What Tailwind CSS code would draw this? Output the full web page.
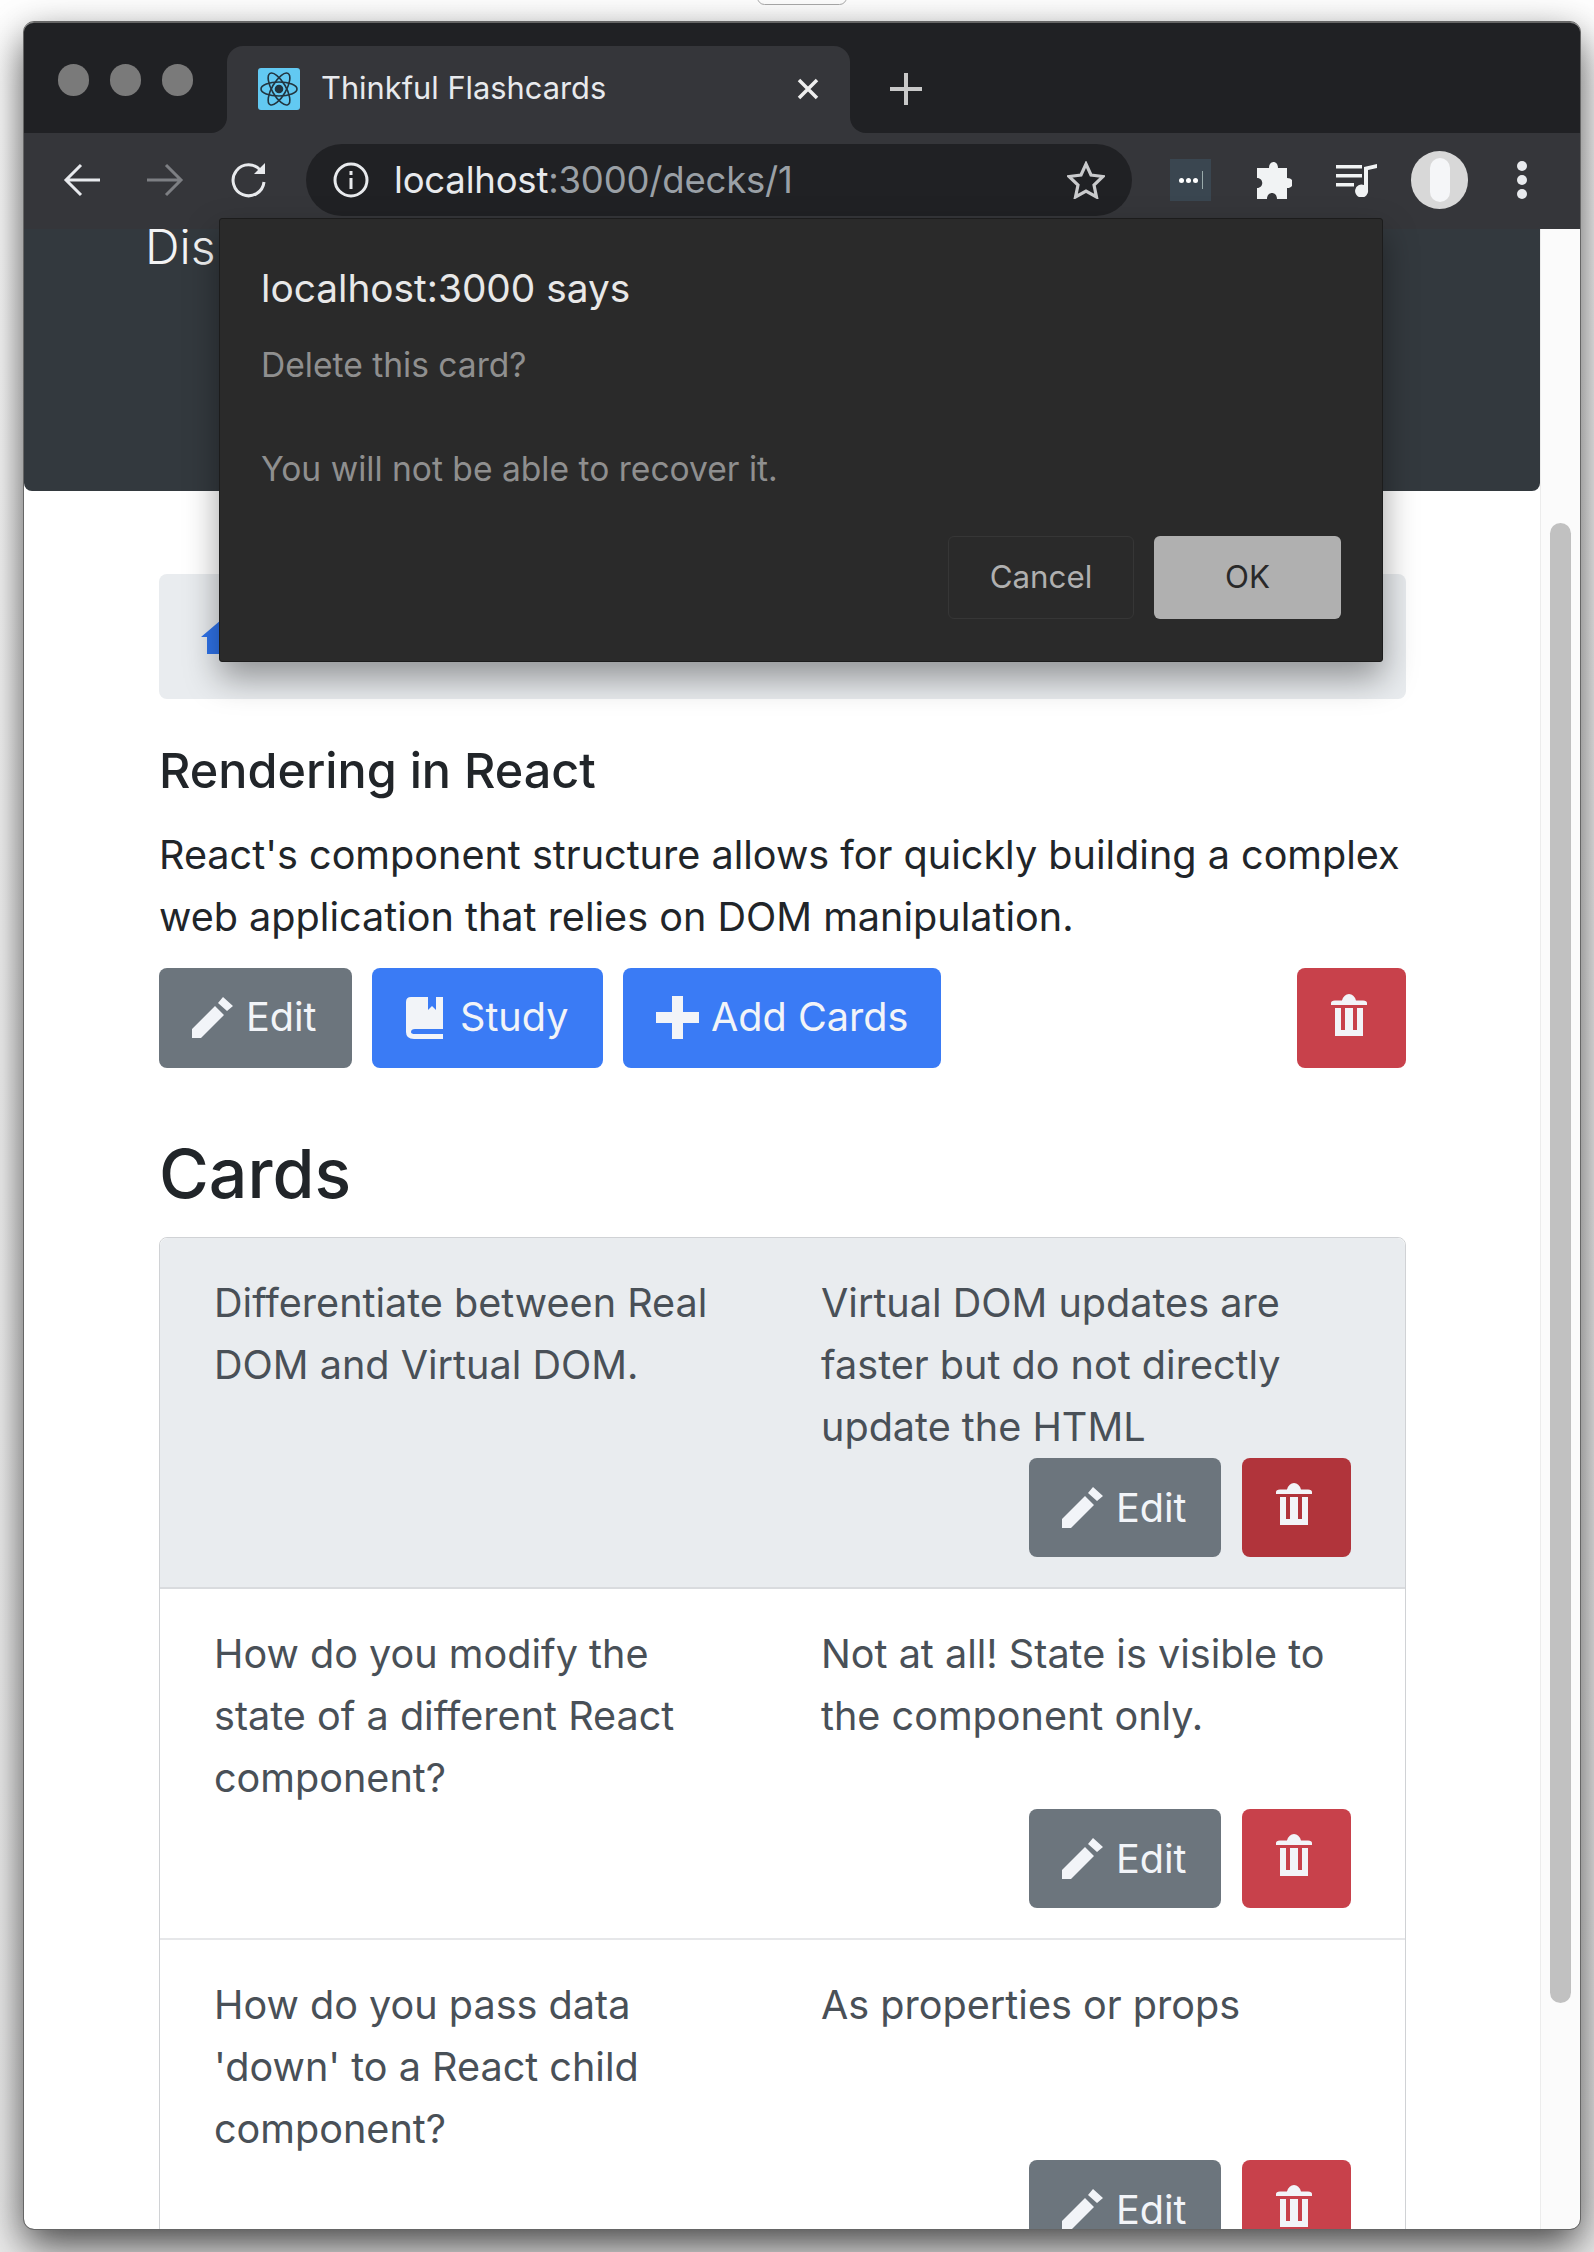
<!DOCTYPE html>
<html lang="en">
<head>
  <meta charset="UTF-8" />
  <title>Thinkful Flashcards</title>
  <script src="https://cdn.jsdelivr.net/npm/@tailwindcss/browser@4"></script>
</head>
<body class="relative h-[2252px] overflow-hidden bg-gradient-to-b from-white to-[#ececec] font-['Inter','Liberation_Sans',sans-serif]">
  <svg class="hidden">
    <symbol id="pencil" viewBox="0 0 42 42"><path d="M0 42V33L23 10L32 19L9 42Z M26 7L31 1L41 10L35 15Z" fill="currentColor"/></symbol>
    <symbol id="trash" viewBox="0 0 36 42"><path d="M0 9Q0 6.500 4 6.500H11Q13 0 18 0Q23 0 25 6.500H32Q36 6.500 36 9V11H0Z M4 14H10V36H14V14H22V36H26V14H32V42H4Z" fill="currentColor" fill-rule="evenodd"/></symbol>
  </svg>

  <!-- tiny pill peeking in at the top -->
  <div class="absolute left-[757px] top-[-10px] h-[15px] w-[90px] rounded-[8px] border border-[#aaa] bg-white"></div>

  <div class="absolute left-[24px] top-[22px] flex h-[2207px] w-[1556px] flex-col overflow-hidden rounded-[10px] border-t border-[#666] bg-white shadow-[0_16px_42px_rgba(0,0,0,0.72)] outline outline-[#666]">

    <!-- tab strip -->
    <div class="flex h-[110px] shrink-0 bg-[linear-gradient(#202124_50%,#35363a_50%)]">
      <div class="flex w-[203px] gap-[21px] rounded-br-[16px] bg-[#202124] pl-[34px] pt-[41px]">
        <span class="h-[32px] w-[31px] rounded-full bg-[#7a7a7a]"></span>
        <span class="h-[32px] w-[31px] rounded-full bg-[#7a7a7a]"></span>
        <span class="h-[32px] w-[31px] rounded-full bg-[#7a7a7a]"></span>
      </div>
      <div class="mt-[23px] flex w-[623px] items-center rounded-t-[16px] bg-[#35363a] pb-[2px] pl-[31px]">
        <svg class="h-[42px] w-[42px] rounded-[3px] bg-[#62c9f2]" viewBox="0 0 42 42" fill="none" stroke="#22343f" stroke-width="1.600">
          <ellipse cx="21" cy="21" rx="18" ry="7"/>
          <ellipse cx="21" cy="21" rx="18" ry="7" transform="rotate(60 21 21)"/>
          <ellipse cx="21" cy="21" rx="18" ry="7" transform="rotate(120 21 21)"/>
          <circle cx="21" cy="21" r="3.500" fill="#22343f"/>
        </svg>
        <span class="ml-[21px] text-[30.800px] text-[#e8eaed]">Thinkful Flashcards</span>
        <svg class="ml-auto mr-[31px] h-[22px] w-[22px]" viewBox="0 0 22 22" stroke="#eee" stroke-width="3.500"><path d="M2 2L20 20M20 2L2 20"/></svg>
      </div>
      <div class="flex flex-1 items-center rounded-bl-[16px] bg-[#202124] pl-[40px] pt-[22px]">
        <svg class="h-[32px] w-[32px]" viewBox="0 0 32 32" stroke="#c8c8c8" stroke-width="4"><path d="M16 0V32M0 16H32"/></svg>
      </div>
    </div>

    <!-- toolbar -->
    <div class="flex h-[96px] shrink-0 items-center bg-[#35363a] pb-[2px]">
      <svg class="ml-[39px] h-[34px] w-[38px]" viewBox="0 0 38 34" fill="none" stroke="#e8eaed" stroke-width="3"><path d="M37 17H3M18 2L3 17L18 32"/></svg>
      <svg class="ml-[45px] h-[34px] w-[38px]" viewBox="0 0 38 34" fill="none" stroke="#7d7f83" stroke-width="3"><path d="M1 17H35M20 2L35 17L20 32"/></svg>
      <svg class="ml-[45px] h-[36px] w-[38px]" viewBox="0 0 38 36" fill="none" stroke="#e8eaed" stroke-width="3"><path d="M32 9A15.500 15.500 0 1 0 35 20"/><path d="M36 1V12H25Z" fill="#e8eaed" stroke="none"/></svg>
      <div class="ml-[39px] flex h-[72px] w-[826px] items-center rounded-full bg-[#202124] pl-[27px]">
        <svg class="h-[36px] w-[36px]" viewBox="0 0 36 36" fill="none" stroke="#e8eaed" stroke-width="3"><circle cx="18" cy="18" r="16"/><path d="M18 16V27M18 9V13"/></svg>
        <span class="ml-[25px] text-[36.500px] tracking-[-0.2px] text-[#e8eaed]">localhost<span class="text-[#9aa0a6]">:3000/decks/1</span></span>
        <svg class="ml-auto mr-[27px] h-[38px] w-[38px]" viewBox="0 0 38 38" fill="none" stroke="#c9cacc" stroke-width="3.200"><path d="M19 3L24 14L36 15.500L27 24L29.500 36L19 30L8.500 36L11 24L2 15.500L14 14Z"/></svg>
      </div>
      <div class="ml-[38px] flex h-[42px] w-[41px] items-center justify-center gap-[2px] bg-[#3a4650]">
        <span class="h-[5px] w-[5px] rounded-full bg-white"></span><span class="h-[5px] w-[5px] rounded-full bg-white"></span><span class="h-[5px] w-[5px] rounded-full bg-white"></span><span class="ml-[2px] h-[18px] w-px bg-[#9aa]"></span>
      </div>
      <svg class="ml-[44px] h-[38px] w-[37px]" viewBox="0 0 37 38" fill="#f1f3f4"><path d="M14 7C14 -1 23 -1 23 7H32V17C40 17 40 27 32 27V38H22C22 30 12 30 12 38H2V27C9 27 9 17 2 17V7Z"/></svg>
      <svg class="ml-[44px] h-[33px] w-[41px]" viewBox="0 0 41 33" fill="#f1f3f4"><path d="M0 1H26V4.500H0ZM0 10H26V13.500H0ZM0 19H18V22.500H0ZM28 3L41 0V4L32 6V26A6.500 6.500 0 1 1 28 21Z"/></svg>
      <div class="ml-[34px] flex h-[58px] w-[57px] items-center justify-center rounded-full bg-[#d8d8d8]">
        <span class="h-[44px] w-[20px] rounded-full bg-[#f5f6f8]"></span>
      </div>
      <div class="ml-[49px] flex flex-col gap-[4px]">
        <span class="h-[10px] w-[10px] rounded-full bg-[#e8eaed]"></span><span class="h-[10px] w-[10px] rounded-full bg-[#e8eaed]"></span><span class="h-[10px] w-[10px] rounded-full bg-[#e8eaed]"></span>
      </div>
    </div>

    <!-- page + scrollbar -->
    <div class="flex min-h-0 flex-1">
      <div class="min-w-0 flex-1 overflow-hidden">
        <div class="h-[262px] rounded-b-[8px] bg-[#33393e] pl-[121px] text-[48px] font-light leading-[36px] text-[#f3f4f5]">Dis</div>

        <div class="ml-[135px] mr-[134px] mt-[83px] flex h-[125px] items-center rounded-[8px] bg-[#e9ecef] pl-[42px]">
          <svg class="h-[34px] w-[40px] text-[#2f73ea]" viewBox="0 0 40 34" fill="currentColor"><path d="M20 0L40 17H34V34H6V17H0Z"/></svg>
        </div>

        <h5 class="ml-[135px] mr-[134px] mt-[41px] text-[48.500px] font-medium leading-[62px] text-[#212529]">Rendering in React</h5>
        <p class="ml-[135px] mr-[134px] mt-[22px] text-[39.600px] leading-[62px] text-[#212529]">React's component structure allows for quickly building a complex<br>web application that relies on DOM manipulation.</p>

        <div class="ml-[135px] mr-[134px] mt-[20px] flex gap-[20px] text-[39.600px] text-[#f2f4f8]">
          <div class="flex h-[100px] w-[193px] items-center rounded-[8px] bg-[#6c757d] pl-[33px]"><svg class="mb-[2px] h-[42px] w-[42px]"><use href="#pencil"/></svg><span class="ml-[12px]">Edit</span></div>
          <div class="flex h-[100px] w-[231px] items-center rounded-[8px] bg-[#3a7bf5] pl-[34px]">
            <svg class="h-[42px] w-[37px]" viewBox="0 0 37 42" fill="currentColor"><path d="M5 0H22V13L26 9L30 13V0H37V32H9Q5 32 5 35Q5 37 9 37H37V42H8Q0 42 0 35V5Q0 0 5 0Z"/></svg>
            <span class="ml-[17px]">Study</span>
          </div>
          <div class="flex h-[100px] w-[318px] items-center rounded-[8px] bg-[#3a7bf5] pl-[33px]">
            <svg class="mb-[2px] h-[43px] w-[43px]" viewBox="0 0 43 43" fill="currentColor"><path d="M16 0H27V16H43V27H27V43H16V27H0V16H16Z"/></svg>
            <span class="ml-[12px]">Add Cards</span>
          </div>
          <div class="ml-auto flex h-[100px] w-[109px] items-center justify-center rounded-[8px] bg-[#c8414b] pb-[7px] pr-[6px]"><svg class="h-[42px] w-[36px]"><use href="#trash"/></svg></div>
        </div>

        <h2 class="ml-[135px] mr-[134px] mt-[57px] text-[68px] font-medium leading-[96px] text-[#212529]">Cards</h2>

        <div class="ml-[135px] mr-[134px] mt-[16px] rounded-t-[8px] border border-[#d0d2d5] text-[39.600px] leading-[62px] text-[#495057]">
          <div class="grid grid-cols-[607px_1fr] rounded-t-[8px] border-b-2 border-[#d9dbde] bg-[#e9ecef] pb-[30px] pl-[54px] pr-[54px] pt-[34px]">
            <p>Differentiate between Real<br>DOM and Virtual DOM.</p>
            <p class="whitespace-nowrap">Virtual DOM updates are<br>faster but do not directly<br>update the HTML</p>
            <div class="col-span-2 flex justify-end gap-[21px] text-[#f2f4f8]">
              <div class="flex h-[99px] w-[192px] items-center rounded-[8px] bg-[#6c757d] pl-[33px]"><svg class="mb-[2px] h-[42px] w-[42px]"><use href="#pencil"/></svg><span class="ml-[12px]">Edit</span></div>
              <div class="flex h-[99px] w-[109px] items-center justify-center rounded-[8px] bg-[#b1343b] pb-[7px] pr-[6px]"><svg class="h-[42px] w-[36px]"><use href="#trash"/></svg></div>
            </div>
          </div>
          <div class="grid grid-cols-[607px_1fr] border-b-2 border-[#e6e7e9] pb-[30px] pl-[54px] pr-[54px] pt-[34px]">
            <p>How do you modify the<br>state of a different React<br>component?</p>
            <p class="whitespace-nowrap">Not at all! State is visible to<br>the component only.</p>
            <div class="col-span-2 flex justify-end gap-[21px] text-[#f2f4f8]">
              <div class="flex h-[99px] w-[192px] items-center rounded-[8px] bg-[#6c757d] pl-[33px]"><svg class="mb-[2px] h-[42px] w-[42px]"><use href="#pencil"/></svg><span class="ml-[12px]">Edit</span></div>
              <div class="flex h-[99px] w-[109px] items-center justify-center rounded-[8px] bg-[#c8414b] pb-[7px] pr-[6px]"><svg class="h-[42px] w-[36px]"><use href="#trash"/></svg></div>
            </div>
          </div>
          <div class="grid grid-cols-[607px_1fr] pb-[30px] pl-[54px] pr-[54px] pt-[34px]">
            <p>How do you pass data<br>'down' to a React child<br>component?</p>
            <p>As properties or props</p>
            <div class="col-span-2 flex justify-end gap-[21px] text-[#f2f4f8]">
              <div class="flex h-[99px] w-[192px] items-center rounded-[8px] bg-[#6c757d] pl-[33px]"><svg class="mb-[2px] h-[42px] w-[42px]"><use href="#pencil"/></svg><span class="ml-[12px]">Edit</span></div>
              <div class="flex h-[99px] w-[109px] items-center justify-center rounded-[8px] bg-[#c8414b] pb-[7px] pr-[6px]"><svg class="h-[42px] w-[36px]"><use href="#trash"/></svg></div>
            </div>
          </div>
        </div>
      </div>

      <div class="w-[40px] shrink-0 border-l border-[#ececec] bg-[#fbfbfb] pl-[9px]">
        <div class="mt-[294px] h-[1480px] w-[21px] rounded-full bg-[#c1c1c1]"></div>
      </div>
    </div>

    <!-- alert dialog -->
    <div class="absolute left-[195px] top-[195px] h-[444px] w-[1164px] rounded-[3px] border border-[#1c1c1c] bg-[#2a2a2a] pl-[41px] shadow-[0_16px_34px_rgba(0,0,0,0.38)]">
      <p class="mt-[43px] text-[38.800px] leading-[52px] text-[#e8e8e8]">localhost:3000 says</p>
      <p class="mt-[26px] text-[33.600px] leading-[50px] text-[#8f8f8f]">Delete this card?</p>
      <p class="mt-[54px] text-[33.600px] leading-[50px] text-[#8f8f8f]">You will not be able to recover it.</p>
      <div class="absolute bottom-[42px] right-[41px] flex gap-[20px] text-[31.300px]">
        <div class="flex h-[83px] w-[186px] items-center justify-center rounded-[6px] border border-[#363636] text-[#b0b0b0]">Cancel</div>
        <div class="flex h-[83px] w-[187px] items-center justify-center rounded-[6px] bg-[#b0b0b0] text-[#292929]">OK</div>
      </div>
    </div>
  </div>
</body>
</html>
